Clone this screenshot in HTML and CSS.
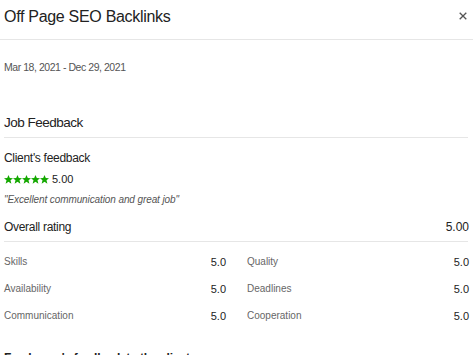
FILE: index.html
```html
<!DOCTYPE html>
<html lang="en">
<head>
  <meta charset="UTF-8" />
  <title>Off Page SEO Backlinks</title>
  <link rel="stylesheet" href="styles.css">
</head>
<body>
  <div class="modal">
    <div class="modal-header">
      <h2>Off Page SEO Backlinks</h2>
      <button class="close-btn" type="button" aria-label="Close">
        <svg width="8" height="8" viewBox="0 0 8 8"><path d="M0.7 0.7L7.3 7.3M7.3 0.7L0.7 7.3" stroke="#555" stroke-width="1.3" fill="none"/></svg>
      </button>
    </div>

    <div class="modal-body">
      <p class="dates">Mar 18, 2021 - Dec 29, 2021</p>

      <h3 class="section-title">Job Feedback</h3>

      <h4 class="sub-title">Client's feedback</h4>
      <div class="stars-row">
        <span class="stars">
          <svg width="45" height="9" viewBox="0 0 45 9">
            <defs>
              <path id="star" d="M4.5 0L5.8 3L9 3.2L6.5 5.3L7.4 8.7L4.5 6.8L1.6 8.7L2.5 5.3L0 3.2L3.2 3Z"/>
            </defs>
            <use href="#star" x="0" fill="#14a800"/>
            <use href="#star" x="9" fill="#14a800"/>
            <use href="#star" x="18" fill="#14a800"/>
            <use href="#star" x="27" fill="#14a800"/>
            <use href="#star" x="36" fill="#14a800"/>
          </svg>
        </span>
        <span class="score">5.00</span>
      </div>
      <p class="quote">"Excellent communication and great job"</p>

      <div class="overall">
        <span>Overall rating</span>
        <span>5.00</span>
      </div>

      <div class="ratings">
        <div class="rating"><span>Skills</span><span class="val">5.0</span></div>
        <div class="rating"><span>Quality</span><span class="val">5.0</span></div>
        <div class="rating"><span>Availability</span><span class="val">5.0</span></div>
        <div class="rating"><span>Deadlines</span><span class="val">5.0</span></div>
        <div class="rating"><span>Communication</span><span class="val">5.0</span></div>
        <div class="rating"><span>Cooperation</span><span class="val">5.0</span></div>
      </div>

      <h4 class="sub-title bottom">Freelancer's feedback to the client</h4>
    </div>
  </div>
</body>
</html>
```

FILE: styles.css
```css
body {
  margin: 0;
  font-family: "Liberation Sans", Arial, sans-serif;
  color: #222;
  background-color: white;
}

.modal {
  width: 474px;
}

.modal-header {
  display: flex;
  justify-content: space-between;
  align-items: center;
  height: 40px;
  padding: 0 6px 0 4px;
  border-bottom: 1px solid #e6e6e6;
  box-sizing: border-box;
  margin-right: 1px;
}

.modal-header h2 {
  margin: 0;
  font-size: 16px;
  font-weight: normal;
  letter-spacing: -0.3px;
  margin-top: -5px;
}

.close-btn {
  border: none;
  background: none;
  padding: 0;
  margin-top: -8px;
  display: flex;
}

.modal-body {
  padding: 0 5px 0 4px;
}

.dates {
  margin: 20px 0 0;
  font-size: 10.5px;
  letter-spacing: -0.45px;
  color: #555;
  line-height: 14px;
}

.section-title {
  margin: 40px 0 0;
  font-size: 13.5px;
  letter-spacing: -0.5px;
  font-weight: normal;
  line-height: 17px;
  padding-bottom: 6px;
  border-bottom: 1px solid #e6e6e6;
  margin-right: 1px;
}

.sub-title {
  margin: 12px 0 0;
  font-size: 12px;
  letter-spacing: -0.3px;
  font-weight: normal;
  line-height: 16px;
}

.stars-row {
  display: flex;
  align-items: center;
  gap: 3px;
  margin-top: 5px;
  height: 16px;
}

.stars svg {
  display: block;
}

.score {
  font-size: 11px;
}

.quote {
  margin: 6px 0 0;
  font-size: 10px;
  letter-spacing: -0.1px;
  font-style: italic;
  color: #555;
  line-height: 14px;
}

.overall {
  display: flex;
  justify-content: space-between;
  font-size: 12px;
  letter-spacing: -0.3px;
  line-height: 16px;
  margin-top: 12px;
  padding-bottom: 6px;
  border-bottom: 1px solid #e6e6e6;
  margin-right: 1px;
}

.overall span:last-child {
  margin-right: -1px;
  letter-spacing: 0;
}

.ratings {
  display: grid;
  grid-template-columns: 1fr 1fr;
  column-gap: 21px;
  margin-top: 13px;
}

.rating {
  display: flex;
  justify-content: space-between;
  font-size: 10px;
  line-height: 14px;
  height: 27px;
}

.rating span {
  color: #666;
}

.rating .val {
  color: #222;
  font-size: 11px;
}

.sub-title.bottom {
  margin-top: 14px;
  font-weight: bold;
}
```
